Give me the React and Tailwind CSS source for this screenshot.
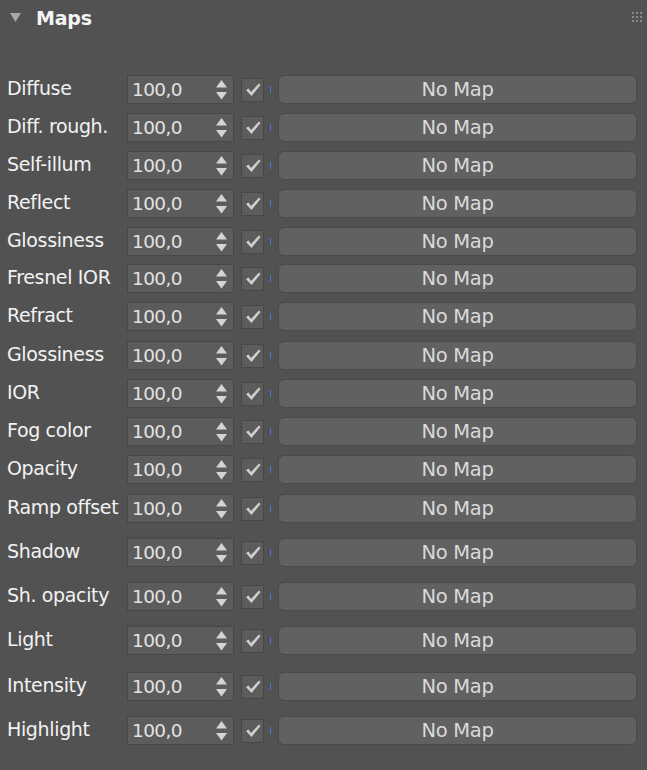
import React from "react";

const rows = [
  { label: "Diffuse", mt: "mt-0" },
  { label: "Diff. rough.", mt: "mt-[9px]" },
  { label: "Self-illum", mt: "mt-[9px]" },
  { label: "Reflect", mt: "mt-[9px]" },
  { label: "Glossiness", mt: "mt-[9px]" },
  { label: "Fresnel IOR", mt: "mt-[8px]" },
  { label: "Refract", mt: "mt-[9px]" },
  { label: "Glossiness", mt: "mt-[10px]" },
  { label: "IOR", mt: "mt-[9px]" },
  { label: "Fog color", mt: "mt-[9px]" },
  { label: "Opacity", mt: "mt-[9px]" },
  { label: "Ramp offset", mt: "mt-[10px]" },
  { label: "Shadow", mt: "mt-[15px]" },
  { label: "Sh. opacity", mt: "mt-[15px]" },
  { label: "Light", mt: "mt-[15px]" },
  { label: "Intensity", mt: "mt-[17px]" },
  { label: "Highlight", mt: "mt-[15px]" },
];

const Spinner = () => (
  <svg width="13" height="22" viewBox="0 0 13 22" className="mr-[5px]">
    <path d="M6.5 1 L12 8.5 L1 8.5 Z" fill="#d4d4d4" />
    <path d="M1 13 L12 13 L6.5 20.5 Z" fill="#d4d4d4" />
  </svg>
);

const Check = () => (
  <svg width="16" height="14" viewBox="0 0 16 14">
    <path d="M1 7 L3.5 5.5 L6 9 L14 0.5 L15.5 2 L6.5 13 Z" fill="#cfcfcf" />
  </svg>
);

const Row = ({ label, mt }) => (
  <div className={`flex items-center h-[29px] ${mt}`}>
    <div className="w-[120px] shrink-0 text-[19px] text-[#f2f2f2] whitespace-nowrap tracking-[-0.35px] pb-[2px]">
      {label}
    </div>
    <div className="w-[107px] h-[29px] shrink-0 flex items-center justify-between bg-[#5c5c5c] border border-[#474747] pl-[4px]">
      <span className="text-[18.5px] text-[#e2e2e2] tracking-[-0.6px]">100,0</span>
      <Spinner />
    </div>
    <div className="ml-[7px] w-[23px] h-[24px] shrink-0 flex items-center justify-center bg-[#5c5c5c] border border-[#474747]">
      <Check />
    </div>
    <div className="ml-[6px] w-px h-[7px] bg-[#4a7ad8] shrink-0" />
    <button className="ml-[7px] w-[359px] h-[29px] shrink-0 flex items-center justify-center bg-[#616161] border border-[#4a4a4a] rounded-[6px] text-[19.5px] text-[#dadada] tracking-[-0.3px]">
      No Map
    </button>
  </div>
);

export default function App() {
  return (
    <div
      className="w-[647px] h-[770px] bg-[#525252] overflow-hidden relative"
      style={{ fontFamily: '"DejaVu Sans", Tahoma, sans-serif' }}
    >
      <div className="flex items-center h-[36px] pl-[10px] pt-[1px]">
        <svg width="11" height="9" viewBox="0 0 11 9" className="mb-[3px]">
          <path d="M0 0 L11 0 L5.5 9 Z" fill="#a6a6a6" />
        </svg>
        <span className="ml-[15px] text-[19px] font-bold text-[#f4f4f4] tracking-[-0.2px]">Maps</span>
      </div>
      <div className="absolute right-[5px] top-[12px] grid grid-cols-3 gap-[2px]">
        {Array.from({ length: 9 }).map((_, i) => (
          <div key={i} className="w-[2px] h-[2px] bg-[#8a8a8a]" />
        ))}
      </div>
      <div className="flex flex-col pl-[7px] pt-[39px]">
        {rows.map((r, i) => (
          <Row key={i} label={r.label} mt={r.mt} />
        ))}
      </div>
    </div>
  );
}
